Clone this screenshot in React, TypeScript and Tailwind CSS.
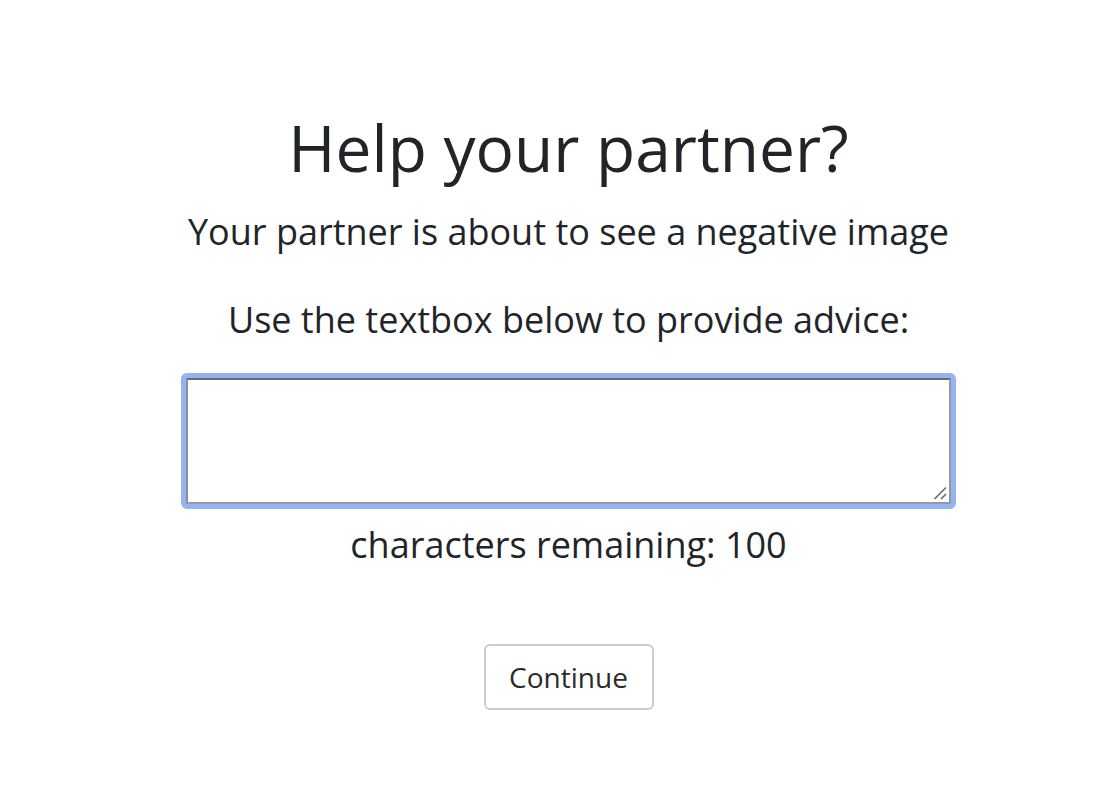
import { useState } from "react";

export default function App() {
  const [advice, setAdvice] = useState("");
  const remaining = 100 - advice.length;

  return (
    <div
      className="flex min-h-[786px] flex-col items-center bg-white pl-[38px] text-[#212529]"
      style={{ fontFamily: '"Open Sans", sans-serif' }}
    >
      <h1 className="mt-[104px] text-[64px] leading-[88px]">Help your partner?</h1>
      <p className="mt-[16px] text-[36px] leading-[48px]">
        Your partner is about to see a negative image
      </p>
      <p className="mt-[40px] text-[36px] leading-[48px]">
        Use the textbox below to provide advice:
      </p>
      <div className="relative mt-[29px] rounded-[6px] border-[5px] border-[#93b3f2]">
        <textarea
          value={advice}
          maxLength={100}
          onChange={(e) => setAdvice(e.target.value)}
          className="block h-[126px] w-[765px] resize-none border-2 border-t-[#6a6a6a] border-r-[#999] border-b-[#999] border-l-[#8f8f8f] bg-white p-1 outline-none"
        />
        {/* resize grip */}
        <svg
          className="pointer-events-none absolute right-[4px] bottom-[4px]"
          width="14"
          height="14"
          viewBox="0 0 14 14"
        >
          <path d="M1.5 13 L13 1.5 M8 13 L13 8" stroke="#6b6b6b" strokeWidth="1.6" />
        </svg>
      </div>
      <p className="mt-[12px] text-[36px] leading-[48px]">
        characters remaining: {remaining}
      </p>
      <button className="mt-[75px] h-[66px] w-[170px] rounded-[6px] border-2 border-[#cccccc] bg-white text-[28px] text-[#2b2b2b]">
        Continue
      </button>
    </div>
  );
}
